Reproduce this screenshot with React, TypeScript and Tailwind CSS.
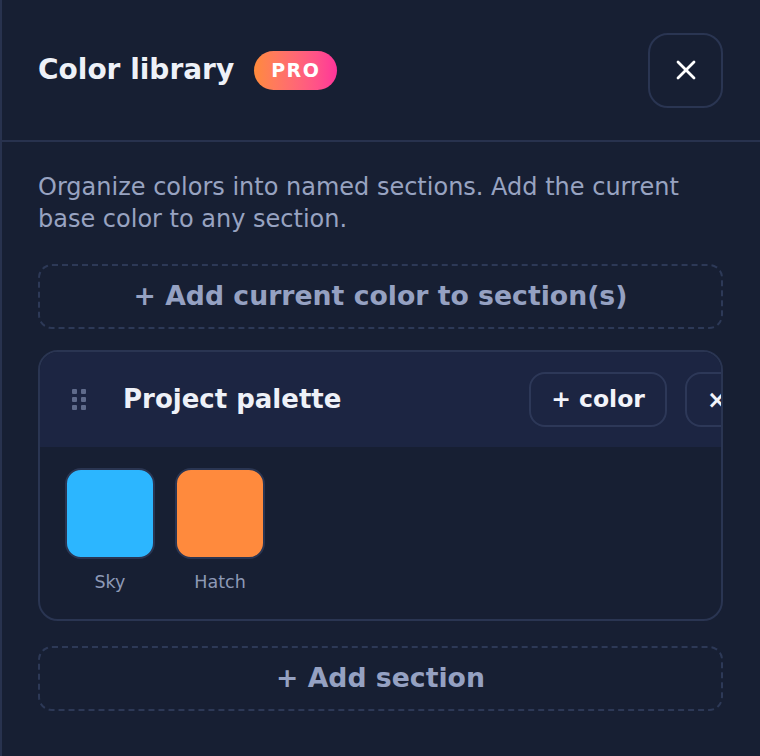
import { X } from 'lucide-react';

type Swatch = { name: string; color: string };

const swatches: Swatch[] = [
  { name: 'Sky', color: '#2cb6ff' },
  { name: 'Hatch', color: '#ff8a3d' },
];

const DragHandle = () => (
  <svg width="14" height="21" viewBox="0 0 14 21" className="shrink-0">
    {[0, 8, 16].map(y => (
      <g key={y} fill="#5f6b8b">
        <rect x="0" y={y} width="5" height="5" rx="1" />
        <rect x="9" y={y} width="5" height="5" rx="1" />
      </g>
    ))}
  </svg>
);

const App = () => {
  return (
    <div className="min-h-screen w-full bg-[#171f33] border-l-2 border-[#28324e] font-['DejaVu_Sans',sans-serif]">
      {/* Header */}
      <header className="h-[142px] flex items-center justify-between pl-[36px] pr-[37px] border-b-2 border-[#28324e]">
        <div className="flex items-center">
          <h1 className="text-[28px] font-bold text-[#eef1f8] leading-none">Color library</h1>
          <span className="ml-[20px] h-[39px] px-[17px] rounded-full bg-gradient-to-r from-[#ff8a3a] to-[#ff3399] flex items-center text-[19px] font-bold tracking-[1.5px] text-white">
            PRO
          </span>
        </div>
        <button className="w-[75px] h-[75px] rounded-[20px] border-2 border-[#2a3552] flex items-center justify-center text-white">
          <X size={32} strokeWidth={2.1} />
        </button>
      </header>

      <main className="pl-[36px] pr-[37px] pt-[29px]">
        <p className="text-[24px] leading-[32px] text-[#98a3c1]">
          Organize colors into named sections. Add the current base color to any section.
        </p>

        <button className="mt-[29px] w-full h-[65px] rounded-[14px] border-2 border-dashed border-[#2d3957] text-[26.7px] font-bold text-[#95a1c2]">
          + Add current color to section(s)
        </button>

        {/* Section card */}
        <div className="mt-[21px] rounded-[20px] border-2 border-[#2a3552] overflow-hidden">
          <div className="h-[95px] bg-[#1c2542] flex items-center pl-[32px]">
            <DragHandle />
            <h2 className="ml-[37px] text-[26px] font-bold text-[#eef1f8]">Project palette</h2>
            <div className="ml-auto flex items-center gap-[18px] -mr-[28px] shrink-0">
              <button className="h-[55px] px-[20px] rounded-[16px] border-2 border-[#2d3858] text-[23.5px] font-bold text-[#f2f4fa]">
                + color
              </button>
              <button className="h-[55px] px-[20px] rounded-[16px] border-2 border-[#2d3858] text-[24px] font-bold text-[#f2f4fa]">
                ×
              </button>
            </div>
          </div>
          <div className="flex gap-[20px] px-[25px] pt-[21px] pb-[25px]">
            {swatches.map(s => (
              <div key={s.name} className="flex flex-col items-center">
                <div
                  className="w-[90px] h-[91px] rounded-[16px] border-2 border-[#2a3552]"
                  style={{ backgroundColor: s.color }}
                />
                <span className="mt-[11px] text-[17.5px] leading-[24px] text-[#8d99b6]">{s.name}</span>
              </div>
            ))}
          </div>
        </div>

        <button className="mt-[25px] w-full h-[65px] rounded-[14px] border-2 border-dashed border-[#2d3957] text-[26.7px] font-bold text-[#95a1c2]">
          + Add section
        </button>
      </main>
    </div>
  );
};

export default App;
